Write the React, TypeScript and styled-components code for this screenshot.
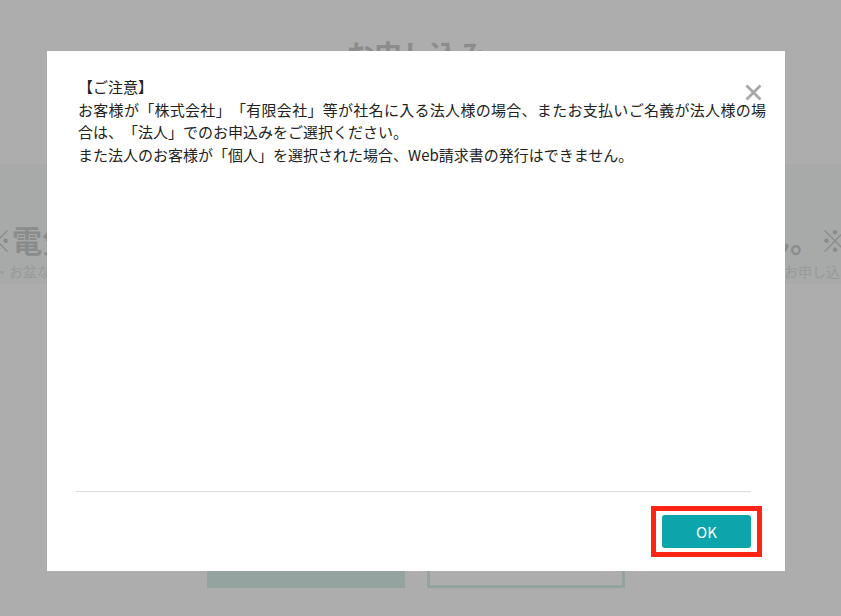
import React from "react";
import styled, { createGlobalStyle } from "styled-components";

const GlobalStyle = createGlobalStyle`
    html, body {
        margin: 0;
        height: 100%;
    }
    body {
        font-family: "Noto Sans CJK JP", "Noto Sans", sans-serif;
        background: #fff;
        overflow: hidden;
    }
`

const Page = styled.div`
    position: relative;
    height: 616px;
    display: flex;
    flex-direction: column;
    overflow: hidden;
`

const Header = styled.h1`
    margin: 0;
    height: 164px;
    box-sizing: border-box;
    padding: 34px 9px 0 0;
    text-align: center;
    font-size: 28px;
    line-height: 40px;
    font-weight: 700;
    color: #cecece;
`

const Band = styled.div`
    height: 120px;
    box-sizing: border-box;
    padding-top: 58px;
    background: #f8fbfa;
    overflow: hidden;
    display: flex;
    flex-direction: column;
    gap: 5px;
`

const BandRow = styled.div<{ $size: number; $bold?: boolean }>`
    display: flex;
    justify-content: space-between;
    white-space: nowrap;
    font-size: ${(p) => p.$size}px;
    line-height: ${(p) => (p.$bold ? 34 : 20)}px;
    font-weight: ${(p) => (p.$bold ? 700 : 400)};
    color: ${(p) => (p.$bold ? "#cbcecd" : "#e2e2e2")};
`

const BandText = styled.span<{ $side: "left" | "right"; $offset: number }>`
    flex: none;
    ${(p) => (p.$side === "left" ? `margin-left: -${p.$offset}px;` : `margin-right: -${p.$offset}px;`)}
`

const Actions = styled.div`
    margin-top: 254px;
    padding-right: 9px;
    display: flex;
    justify-content: center;
    gap: 22px;
`

const PageButton = styled.div<{ $outline?: boolean }>`
    width: 198px;
    height: 50px;
    box-sizing: border-box;
    background: ${(p) => (p.$outline ? "transparent" : "#daf0ea")};
    border: 3px solid #daf0ea;
`

const Overlay = styled.div`
    position: absolute;
    inset: 0;
    background: rgba(0, 0, 0, 0.32);
    display: flex;
    justify-content: center;
    align-items: flex-start;
    padding: 51px 9px 0 0;
`

const Modal = styled.div`
    position: relative;
    width: 738px;
    height: 520px;
    background: #fff;
    display: flex;
    flex-direction: column;
`

const ModalBody = styled.div`
    flex: 1;
    padding: 25px 19px 0 31px;
    font-size: 15px;
    line-height: 22.5px;
    color: #222;
    text-align: justify;
    text-spacing-trim: space-all;
`

const CloseButton = styled.button`
    position: absolute;
    top: 33px;
    right: 23px;
    width: 17px;
    height: 17px;
    padding: 0;
    border: none;
    background: none;
    cursor: pointer;
    display: flex;
`

const Footer = styled.div`
    margin: 0 34px 0 29px;
    border-top: 1px solid #dcdcdc;
    padding: 23px 0;
    display: flex;
    justify-content: flex-end;
`

const Highlight = styled.span`
    display: inline-flex;
    border: 5px solid #ff2414;
    padding: 4px 6px;
    margin: -9px -11px;
`

const OkButton = styled.button`
    width: 89px;
    height: 33px;
    border: none;
    border-radius: 3px;
    background: #0ca5ab;
    color: #fff;
    font-family: inherit;
    font-size: 15px;
    cursor: pointer;
`

const App = () => {
    return (
        <>
            <GlobalStyle />
            <Page>
                <Header>お申し込み</Header>
                <Band>
                    <BandRow $size={30} $bold>
                        <BandText $side="left" $offset={18}>※電気のお申し込み</BandText>
                        <BandText $side="right" $offset={9}>ございません。※</BandText>
                    </BandRow>
                    <BandRow $size={14}>
                        <BandText $side="left" $offset={5}>・お盆など長期休暇</BandText>
                        <BandText $side="right" $offset={13}>お申し込み</BandText>
                    </BandRow>
                </Band>
                <Actions>
                    <PageButton />
                    <PageButton $outline />
                </Actions>

                <Overlay>
                    <Modal>
                        <CloseButton aria-label="閉じる">
                            <svg width="17" height="17" viewBox="0 0 17 17">
                                <path d="M1.5 1.5 L15.5 15.5 M15.5 1.5 L1.5 15.5" stroke="#a8a8a8" strokeWidth="2.8" strokeLinecap="butt" />
                            </svg>
                        </CloseButton>
                        <ModalBody>
                            【ご注意】<br />
                            お客様が「株式会社」「有限会社」等が社名に入る法人様の場合、またお支払いご名義が法人様の場合は、「法人」でのお申込みをご選択ください。<br />
                            また法人のお客様が「個人」を選択された場合、Web請求書の発行はできません。
                        </ModalBody>
                        <Footer>
                            <Highlight>
                                <OkButton>OK</OkButton>
                            </Highlight>
                        </Footer>
                    </Modal>
                </Overlay>
            </Page>
        </>
    );
};

export default App;
